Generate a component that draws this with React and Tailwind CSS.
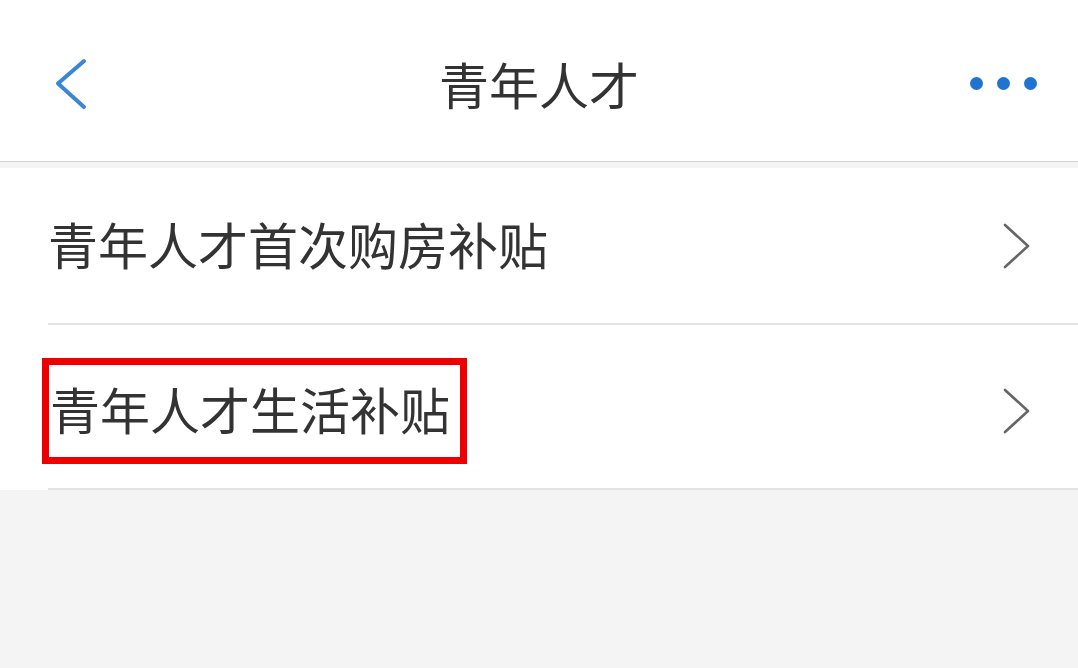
import React from 'react';

const font = { fontFamily: '"Noto Sans CJK SC", "Noto Sans", sans-serif' };

function Chevron() {
  return (
    <svg width="30" height="48" viewBox="0 0 30 48" className="absolute right-[46px]">
      <polyline points="3,3 26,24 3,45" fill="none" stroke="#666" strokeWidth="2.6" strokeLinecap="round" strokeLinejoin="round" />
    </svg>
  );
}

export default function App() {
  return (
    <div className="w-[1078px] h-[668px] bg-[#f4f4f4] text-[#333] overflow-hidden" style={font}>
      {/* header */}
      <div className="relative h-[162px] bg-white border-b border-[#d2d2d2] flex items-center justify-center">
        <svg width="32" height="52" viewBox="0 0 32 52" className="absolute left-[55px] top-[58px]">
          <polyline points="29,3 3,25.5 29,49" fill="none" stroke="#3a86d6" strokeWidth="4" strokeLinecap="round" strokeLinejoin="round" />
        </svg>
        <span className="text-[50px] leading-none mt-[4px]">青年人才</span>
        <div className="absolute right-[41px] top-[77px] flex gap-[14px]">
          <span className="w-[13px] h-[13px] rounded-full bg-[#1f74d1]" />
          <span className="w-[13px] h-[13px] rounded-full bg-[#1f74d1]" />
          <span className="w-[13px] h-[13px] rounded-full bg-[#1f74d1]" />
        </div>
      </div>

      {/* list */}
      <div className="mt-[6px] bg-white">
        <div className="relative h-[155px] flex items-center pl-[48px]">
          <span className="text-[50px] leading-none -mt-[6px]">青年人才首次购房补贴</span>
          <Chevron />
        </div>
        <div className="ml-[48px] h-[2px] bg-[#e3e3e3]" />
        <div className="relative h-[163px] flex items-center pl-[42px] pt-[8px]">
          <div className="w-[425px] h-[106px] border-[7px] border-[#ee0000] flex items-center pl-[1px]">
            <span className="text-[50px] leading-none -mt-[6px]">青年人才生活补贴</span>
          </div>
          <Chevron />
        </div>
        <div className="ml-[48px] h-[2px] bg-[#e3e3e3]" />
      </div>
    </div>
  );
}
